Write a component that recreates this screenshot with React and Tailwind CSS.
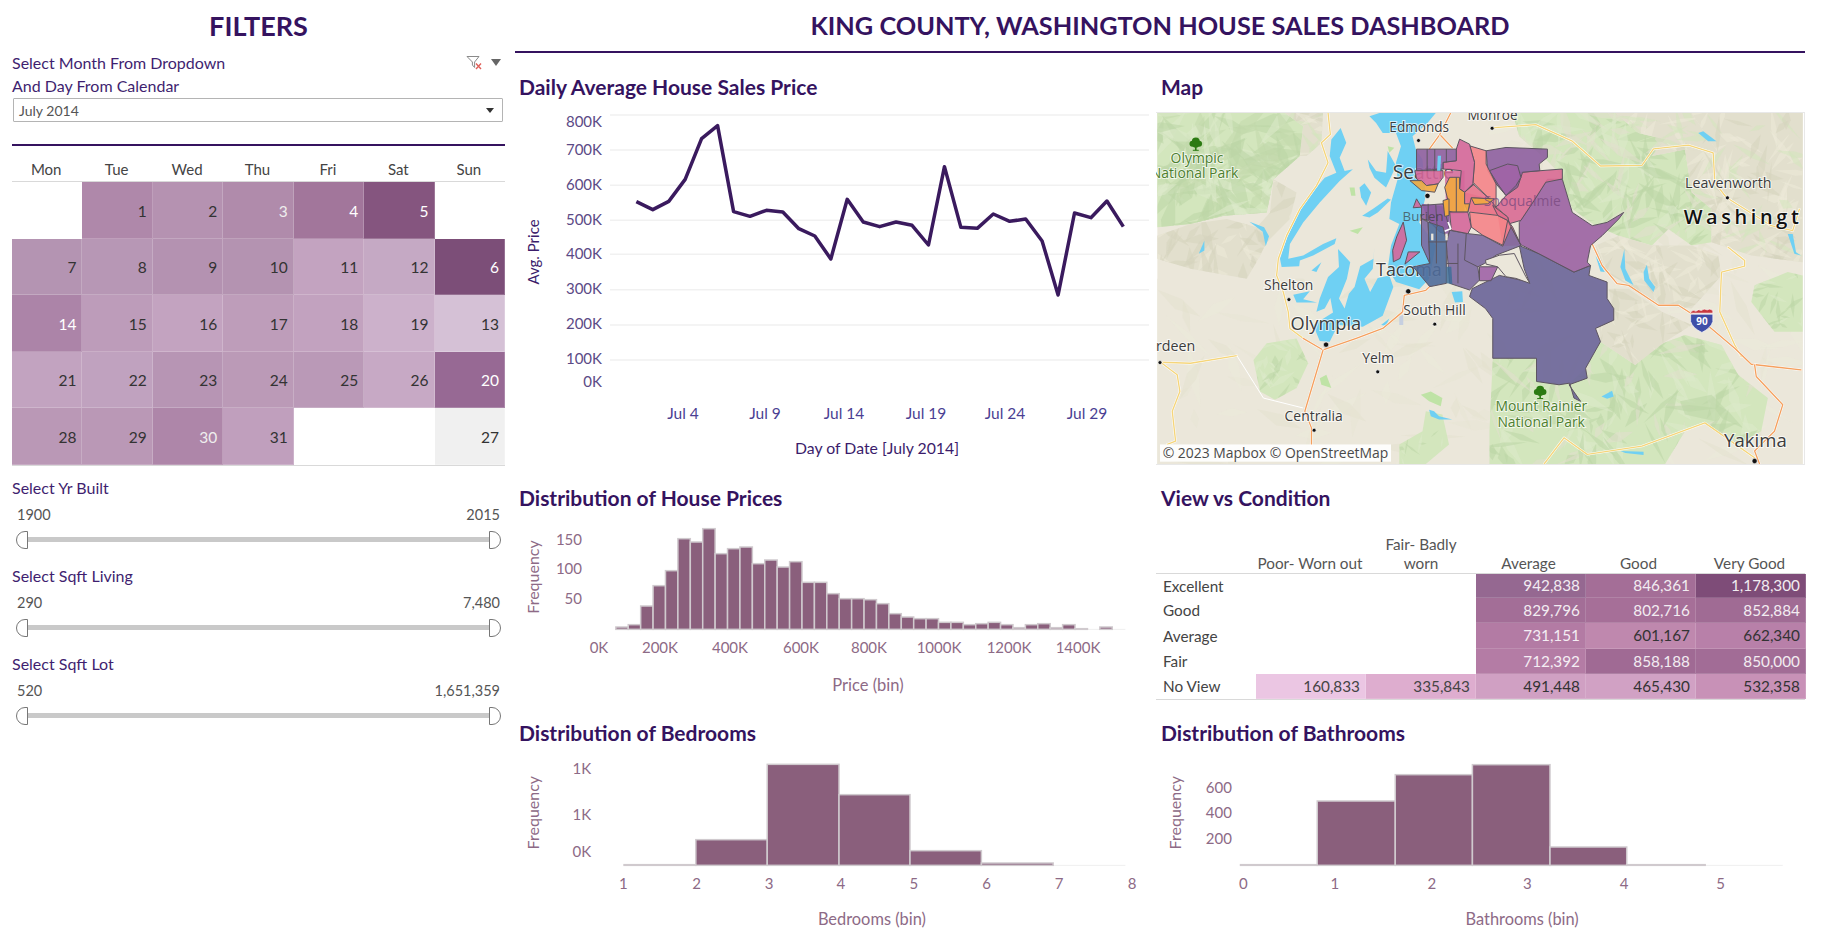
import React from "react";

const AXIS = "#8d6a86";

const calendar = [
  [null, ["1", "bg-[#af88aa]", "text-[#333]"], ["2", "bg-[#b592b1]", "text-[#333]"], ["3", "bg-[#b08bab]", "text-[#eee]"], ["4", "bg-[#a2769b]", "text-white"], ["5", "bg-[#85557f]", "text-white"], null],
  [["7", "bg-[#b494b2]", "text-[#333]"], ["8", "bg-[#b797b5]", "text-[#333]"], ["9", "bg-[#b492b1]", "text-[#333]"], ["10", "bg-[#b493b1]", "text-[#333]"], ["11", "bg-[#c3a3c0]", "text-[#333]"], ["12", "bg-[#c5a9c4]", "text-[#333]"], ["6", "bg-[#7c4e78]", "text-white"]],
  [["14", "bg-[#ac84a8]", "text-white"], ["15", "bg-[#bd9cba]", "text-[#333]"], ["16", "bg-[#c3a3c0]", "text-[#333]"], ["17", "bg-[#be9dba]", "text-[#333]"], ["18", "bg-[#c2a2bf]", "text-[#333]"], ["19", "bg-[#ccb1cb]", "text-[#333]"], ["13", "bg-[#d5c1d6]", "text-[#333]"]],
  [["21", "bg-[#c2a3c0]", "text-[#333]"], ["22", "bg-[#c0a2bf]", "text-[#333]"], ["23", "bg-[#b795b4]", "text-[#333]"], ["24", "bg-[#bb9ab7]", "text-[#333]"], ["25", "bg-[#ba99b7]", "text-[#333]"], ["26", "bg-[#c7a9c5]", "text-[#333]"], ["20", "bg-[#976994]", "text-white"]],
  [["28", "bg-[#ba98b6]", "text-[#333]"], ["29", "bg-[#ba98b6]", "text-[#333]"], ["30", "bg-[#ae86a9]", "text-[#eee]"], ["31", "bg-[#c09fbd]", "text-[#333]"], null, null, ["27", "bg-[#f0f0f0]", "text-[#333]"]],
];

const days = ["Mon", "Tue", "Wed", "Thu", "Fri", "Sat", "Sun"];

function Calendar() {
  return (
    <div>
      <div className="grid grid-cols-7 h-[36px] border-b border-[#d9d9d9] text-[15px] text-[#444]">
        {days.map((d) => (
          <div key={d} className="flex items-end justify-center pb-[1px] pr-[2px]">{d}</div>
        ))}
      </div>
      {calendar.map((row, r) => (
        <div key={r} className="grid grid-cols-7 h-[56.6px]">
          {row.map((c, i) =>
            c ? (
              <div key={i} className={`flex items-center justify-end pr-[5px] pt-[3px] text-[15.5px] border-b border-r border-white/20 ${c[1]} ${c[2]}`}>{c[0]}</div>
            ) : (
              <div key={i} />
            )
          )}
        </div>
      ))}
      <div className="h-px bg-[#d9d9d9]" />
    </div>
  );
}

function Slider({ label, min, max }) {
  return (
    <div className="mb-[11px]">
      <div className="h-5 leading-5 text-[16px] text-[#3f1f70]">{label}</div>
      <div className="mt-[7px] h-5 leading-5 px-[5px] flex justify-between text-[14.5px] text-[#555]">
        <span>{min}</span>
        <span>{max}</span>
      </div>
      <div className="h-[30px] px-1 flex items-center">
        <div className="w-3 h-[18px] bg-white border border-[#777] rounded-l-full" />
        <div className="flex-1 h-[5px] bg-[#c9c9c9]" />
        <div className="w-3 h-[18px] bg-white border border-[#777] rounded-r-full" />
      </div>
    </div>
  );
}

function Filters() {
  return (
    <aside className="w-[515px] shrink-0 pl-3 pr-[10px]">
      <h1 className="h-[52px] flex items-center justify-center text-[27px] font-bold text-[#35135f]">FILTERS</h1>
      <div className="h-[21px] leading-[21px] flex items-center justify-between text-[16px] text-[#3f1f70]">
        <span>Select Month From Dropdown</span>
        <span className="flex items-center gap-[8px] pr-[4px]">
          <svg width="17" height="15" viewBox="0 0 17 15">
            <path d="M1 1.5h12L8.6 7v5.5L6.4 10V7z" fill="none" stroke="#8a8a8a" strokeWidth="1" />
            <path d="M10 8.5l5 5.5M15 8.5l-5 5.5" stroke="#e0605a" strokeWidth="1.4" />
          </svg>
          <svg width="10" height="7" viewBox="0 0 10 7"><path d="M0 0h10L5 7z" fill="#666" /></svg>
        </span>
      </div>
      <div className="mt-[2px] h-[21px] leading-[21px] text-[16px] text-[#3f1f70]">And Day From Calendar</div>
      <div className="mt-[2px] ml-px mr-[2px] h-[24px] border border-[#b4b4b4] rounded-[1px] flex items-center justify-between px-[5px] text-[14px] text-[#555]">
        <span>July 2014</span>
        <svg width="8" height="5" viewBox="0 0 8 5" className="mr-[3px]"><path d="M0 0h8L4 5z" fill="#333" /></svg>
      </div>
      <div className="mt-[22px] h-[2px] bg-[#35135f]" />
      <Calendar />
      <div className="mt-[12px]">
        <Slider label="Select Yr Built" min="1900" max="2015" />
        <Slider label="Select Sqft Living" min="290" max="7,480" />
        <Slider label="Select Sqft Lot" min="520" max="1,651,359" />
      </div>
    </aside>
  );
}

function PanelTitle({ children, className = "" }) {
  return <h2 className={`h-[30px] leading-[30px] text-[21px] font-bold text-[#35135f] ${className}`}>{children}</h2>;
}

const linePts = [[308,425],[348,449],[387,424],[427,358],[467,236],[506,197],[545,455],[585,469],[625,451],[665,456],[704,506],[743,528],[782,597],[822,418],[861,486],[901,500],[941,486],[980,496],[1020,555],[1059,320],[1099,502],[1139,505],[1178,462],[1218,484],[1257,477],[1297,543],[1336,705],[1376,459],[1416,473],[1455,423],[1495,500]];

function LineChart() {
  const grid = [115, 150, 185.3, 220.3, 254.3, 289.7, 325, 360];
  const yl = [["800K", 123], ["700K", 151], ["600K", 186], ["500K", 221], ["400K", 255], ["300K", 290], ["200K", 325], ["100K", 360], ["0K", 383]];
  const xl = [["Jul 4", 683], ["Jul 9", 765], ["Jul 14", 844], ["Jul 19", 926], ["Jul 24", 1005], ["Jul 29", 1087]];
  const pts = linePts.map(([x, y]) => `${510 + x / 2.4375},${60 + y / 3}`).join(" ");
  return (
    <svg width="641" height="381" viewBox="515 102 641 381" className="block">
      {grid.map((y) => <line key={y} x1="610" x2="1149" y1={y} y2={y} stroke="#f1f1f1" strokeWidth="1.5" />)}
      {yl.map(([t, y]) => <text key={t} x="602" y={y} textAnchor="end" dominantBaseline="middle" fontSize="15" fill="#5b4a86">{t}</text>)}
      {xl.map(([t, x]) => <text key={t} x={x} y="415" textAnchor="middle" dominantBaseline="middle" fontSize="15.5" fill="#4b3f93">{t}</text>)}
      <text x="877" y="450" textAnchor="middle" dominantBaseline="middle" fontSize="15.8" fill="#3b1c6b">Day of Date [July 2014]</text>
      <text transform="translate(535 252) rotate(-90)" textAnchor="middle" dominantBaseline="middle" fontSize="15" fill="#3b1c6b">Avg. Price</text>
      <polyline points={pts} fill="none" stroke="#3a1a5e" strokeWidth="3.5" strokeLinejoin="round" />
    </svg>
  );
}

function Bars({ bars, toX, toY, base }) {
  return bars.map(([a, b, t], i) => (
    <rect key={i} x={toX(a)} width={toX(b) - toX(a)} y={toY(t)} height={Math.max(toY(base) - toY(t), 0.5)} fill="#8a5f7c" stroke="#d0cace" strokeWidth="1.5" />
  ));
}

const priceTops = [441,434,378,317,272,176,186,146,221,206,201,251,240,261,245,307,307,341,356,356,359,371,401,411,416,416,427,427,434,431,427,434,443,434,431,443,434,446,null,441];

function PriceHist() {
  const toX = (z) => 510 + z / 2.4375;
  const toY = (z) => 480 + z / 3;
  const bars = priceTops.map((t, i) => [258 + i * 30.25, 258 + (i + 1) * 30.25, t]).filter((b) => b[2] !== null);
  const xl = [["0K", 599], ["200K", 660], ["400K", 730], ["600K", 801], ["800K", 869], ["1000K", 939], ["1200K", 1009], ["1400K", 1078]];
  return (
    <svg width="641" height="205" viewBox="515 513 641 205" className="block">
      <line x1={toX(258)} x2={toX(1500)} y1={toY(448)} y2={toY(448)} stroke="#efefef" />
      <Bars bars={bars} toX={toX} toY={toY} base={448} />
      {[["150", 541], ["100", 570], ["50", 600]].map(([t, y]) => <text key={t} x="582" y={y} textAnchor="end" dominantBaseline="middle" fontSize="15" fill={AXIS}>{t}</text>)}
      {xl.map(([t, x]) => <text key={t} x={x} y="649" textAnchor="middle" dominantBaseline="middle" fontSize="15" fill={AXIS}>{t}</text>)}
      <text x="868" y="687" textAnchor="middle" dominantBaseline="middle" fontSize="16.5" fill={AXIS}>Price (bin)</text>
      <text transform="translate(535 577) rotate(-90)" textAnchor="middle" dominantBaseline="middle" fontSize="16" fill={AXIS}>Frequency</text>
    </svg>
  );
}

function BedHist() {
  const toX = (z) => 510 + z / 2.4375;
  const toY = (z) => 711 + z / 3;
  const bars = [[278,453,461],[453,627,386],[627,802,160],[802,975,251],[975,1149,419],[1149,1324,456]];
  const xl = [[279,"1"],[457,"2"],[634,"3"],[809,"4"],[987,"5"],[1164,"6"],[1341,"7"],[1519,"8"]];
  return (
    <svg width="641" height="195" viewBox="515 748 641 195" className="block">
      <line x1={toX(278)} x2={toX(1500)} y1={toY(463)} y2={toY(463)} stroke="#efefef" />
      <Bars bars={bars} toX={toX} toY={toY} base={463} />
      {[["1K", 179], ["1K", 315], ["0K", 427]].map(([t, z], i) => <text key={i} x={toX(198)} y={toY(z)} textAnchor="end" dominantBaseline="middle" fontSize="15" fill={AXIS}>{t}</text>)}
      {xl.map(([z, t]) => <text key={t} x={toX(z) - 1} y="885" textAnchor="middle" dominantBaseline="middle" fontSize="15" fill={AXIS}>{t}</text>)}
      <text x={toX(887) - 2} y="921" textAnchor="middle" dominantBaseline="middle" fontSize="16.4" fill={AXIS}>Bedrooms (bin)</text>
      <text transform={`translate(${toX(60)} ${toY(305)}) rotate(-90)`} textAnchor="middle" dominantBaseline="middle" fontSize="16" fill={AXIS}>Frequency</text>
    </svg>
  );
}

function BathHist() {
  const toX = (z) => 1150 + z / 2.32;
  const toY = (z) => 711 + z / 3;
  const bars = [[210,388,461],[388,569,270],[569,748,191],[748,928,161],[928,1106,408],[1106,1288,461]];
  const xl = [[219,"0"],[431,"1"],[656,"2"],[878,"3"],[1102,"4"],[1326,"5"]];
  return (
    <svg width="649" height="195" viewBox="1156 748 649 195" className="block">
      <line x1={toX(210)} x2={toX(1468)} y1={toY(463)} y2={toY(463)} stroke="#efefef" />
      <Bars bars={bars} toX={toX} toY={toY} base={463} />
      {[["600", 228], ["400", 305], ["200", 381]].map(([t, z]) => <text key={t} x={toX(190)} y={toY(z) + 2} textAnchor="end" dominantBaseline="middle" fontSize="15" fill={AXIS}>{t}</text>)}
      {xl.map(([z, t]) => <text key={t} x={toX(z) - 1} y="885" textAnchor="middle" dominantBaseline="middle" fontSize="15" fill={AXIS}>{t}</text>)}
      <text x={toX(868) - 2} y="921" textAnchor="middle" dominantBaseline="middle" fontSize="16.4" fill={AXIS}>Bathrooms (bin)</text>
      <text transform={`translate(${toX(62)} ${toY(305)}) rotate(-90)`} textAnchor="middle" dominantBaseline="middle" fontSize="16" fill={AXIS}>Frequency</text>
    </svg>
  );
}

const tableRows = [
  ["Excellent", "h-[24px]", [null, null, ["942,838", "bg-[#956891]", "text-[#f2ecf1]"], ["846,361", "bg-[#a46e97]", "text-[#f2ecf1]"], ["1,178,300", "bg-[#7e4c78]", "text-[#f2ecf1]"]]],
  ["Good", "h-[25px]", [null, null, ["829,796", "bg-[#a36e97]", "text-[#f2ecf1]"], ["802,716", "bg-[#a66f98]", "text-[#f2ecf1]"], ["852,884", "bg-[#a06b94]", "text-[#f2ecf1]"]]],
  ["Average", "h-[26px]", [null, null, ["731,151", "bg-[#b37ba4]", "text-[#f5eef4]"], ["601,167", "bg-[#bf88ae]", "text-[#333]"], ["662,340", "bg-[#b880a9]", "text-[#333]"]]],
  ["Fair", "h-[25px]", [null, null, ["712,392", "bg-[#b47ca5]", "text-[#f5eef4]"], ["858,188", "bg-[#a06a94]", "text-[#f2ecf1]"], ["850,000", "bg-[#a26c96]", "text-[#f2ecf1]"]]],
  ["No View", "h-[25px]", [["160,833", "bg-[#ebc6e3]", "text-[#444]"], ["335,843", "bg-[#deadcf]", "text-[#444]"], ["491,448", "bg-[#d0a0c3]", "text-[#333]"], ["465,430", "bg-[#d1a1c4]", "text-[#333]"], ["532,358", "bg-[#c891b7]", "text-[#333]"]]],
];

function HeatTable() {
  const cols = "grid grid-cols-[100px_repeat(5,110px)]";
  return (
    <div className="text-[15.3px]">
      <div className={`${cols} h-[61px] items-end border-b border-[#d9d9d9] text-[#555] text-center leading-[19px]`}>
        <div />
        <div className="pr-[2px]">Poor- Worn out</div>
        <div>Fair- Badly<br />worn</div>
        <div className="pr-[5px]">Average</div>
        <div className="pr-[5px]">Good</div>
        <div className="pr-[3px]">Very Good</div>
      </div>
      {tableRows.map(([name, h, cells]) => (
        <div key={name} className={`${cols} ${h}`}>
          <div className="pl-[7px] flex items-center text-[#444]">{name}</div>
          {cells.map((c, i) =>
            c ? (
              <div key={i} className={`flex items-center justify-end pr-[5px] border-b border-r border-white/15 ${c[1]} ${c[2]}`}>{c[0]}</div>
            ) : (
              <div key={i} />
            )
          )}
        </div>
      ))}
      <div className="h-px bg-[#d9d9d9]" />
    </div>
  );
}

const WATER = "#6fd0f3";
const G0 = "#d3e6bd";
const G1 = "#bcd5a5";
const G2 = "#dceaca";
const T0 = "#e2dfcd";
const T1 = "#d6d3bd";
const T2 = "#ecead9";

function rng(seed) {
  let s = seed;
  return () => {
    s = (s * 1664525 + 1013904223) % 4294967296;
    return s / 4294967296;
  };
}

function Facets({ id, points, base, colors, n, seed, size = 90, opacity = 0.55 }) {
  const r = rng(seed);
  const nums = points.trim().split(/[\s,]+/).map(Number);
  const xs = nums.filter((_, i) => i % 2 === 0);
  const ys = nums.filter((_, i) => i % 2 === 1);
  const x0 = Math.min(...xs), x1 = Math.max(...xs), y0 = Math.min(...ys), y1 = Math.max(...ys);
  const shards = [];
  for (let i = 0; i < n; i++) {
    const cx = x0 + r() * (x1 - x0);
    const cy = y0 + r() * (y1 - y0);
    const a = r() * Math.PI;
    const l = size * (0.4 + r());
    const w = size * (0.1 + r() * 0.22);
    const dx = Math.cos(a), dy = Math.sin(a);
    const p = [
      [cx - dx * l, cy - dy * l],
      [cx - dy * w, cy + dx * w],
      [cx + dx * l, cy + dy * l],
      [cx + dy * w * 0.7, cy - dx * w * 0.7],
    ].map((q) => q.map((v) => v.toFixed(0)).join(",")).join(" ");
    shards.push(<polygon key={i} points={p} fill={colors[Math.floor(r() * colors.length)]} fillOpacity={opacity} />);
  }
  return (
    <g>
      <clipPath id={id}><polygon points={points} /></clipPath>
      <polygon points={points} fill={base} />
      <g clipPath={`url(#${id})`}>{shards}</g>
    </g>
  );
}

function Road({ pts, color, w = 4 }) {
  return (
    <g fill="none" strokeLinejoin="round" strokeLinecap="round">
      <polyline points={pts} stroke="#fff" strokeWidth={w + 3} />
      <polyline points={pts} stroke={color} strokeWidth={w} />
    </g>
  );
}

function Dot({ x, y, r = 6 }) {
  return <circle cx={x} cy={y} r={r} fill="#111" stroke="#fff" strokeWidth="2" />;
}

function Label({ x, y, size, children, fill = "#3c3c3c", weight = 400, ls = 0 }) {
  return (
    <text x={x} y={Number(y) + 5} fontSize={size} fill={fill} fontWeight={weight} letterSpacing={ls} dominantBaseline="middle" stroke="#fff" strokeWidth="6" strokeOpacity="0.7" paintOrder="stroke" fontFamily="'Open Sans', sans-serif">{children}</text>
  );
}

function Tree({ x, y }) {
  return (
    <g fill="#2c7a12">
      <circle cx={x - 10} cy={y} r="9" /><circle cx={x + 10} cy={y} r="9" /><circle cx={x} cy={y - 7} r="12" /><circle cx={x} cy={y + 2} r="10" />
      <rect x={x - 2.5} y={y + 6} width="5" height="14" /><rect x={x - 9} y={y + 18} width="18" height="3" />
    </g>
  );
}

const STROKE = "#5d5560";
function R({ p, f }) {
  return <polygon points={p} fill={f} fillOpacity="0.9" stroke={STROKE} strokeWidth="3" strokeLinejoin="round" />;
}

function MapView() {
  return (
    <svg width="649" height="353" viewBox="0 0 1947 1059" className="block border-y border-r border-[#e8e8e8]">
      <rect width="1947" height="1059" fill="#ebe7da" />
      <Facets id="f0" points="0,340 0,1059 1947,1059 1947,0 1000,0 1000,500 0,500" base="#ebe7da" colors={[T2, T0, "#e7e4d3"]} n={260} seed={7} size={70} opacity={0.45} />
      {/* Olympic terrain */}
      <Facets id="f1" points="0,0 385,0 440,40 430,130 350,200 330,300 200,310 100,335 0,345" base={G0} colors={[G1, G2, G1, "#c3d9ab"]} n={130} seed={11} size={80} />
      <Facets id="f2" points="385,0 500,0 495,90 450,130 430,130 440,40" base={T0} colors={[T1, G0, T2]} n={20} seed={13} size={45} />
      <Facets id="f3" points="0,370 100,335 210,320 300,345 340,300 350,200 420,240 400,320 330,390 310,430 270,500 100,470 0,440" base={T0} colors={[T1, T2, T1]} n={70} seed={17} size={60} />
      <Facets id="f4" points="290,745 330,695 420,680 455,755 420,830 355,865 310,840" base={G0} colors={[G1, G2]} n={30} seed={19} size={40} />
      <Facets id="f5" points="730,1000 800,960 810,900 860,910 880,1000 810,1059 730,1059" base={G0} colors={[G1, G2]} n={14} seed={23} size={24} />
      <polygon points="795,850 825,840 860,860 855,885 820,870" fill="#bfe3a6" />
      <polygon points="490,800 510,790 525,830 495,820" fill="#bfe3a6" />
      <polygon points="580,225 595,225 598,250 585,250" fill="#bfe3a6" />
      <polygon points="580,355 620,345 605,365" fill="#bfe3a6" />
      <polygon points="695,100 715,105 700,120" fill="#bfe3a6" />
      {/* east terrain */}
      <g transform="translate(972 0)">
        <Facets id="g1" points="200,0 410,0 480,60 560,80 520,130 620,110 640,240 700,290 700,390 640,400 570,350 520,400 420,370 350,340 280,290 240,180 190,130 120,70 100,0" base={G0} colors={[G1, G2, G1, T0]} n={170} seed={29} size={60} />
        <Facets id="g2" points="410,0 640,0 720,120 700,180 620,110 520,130 560,80 480,60" base={T0} colors={[T1, T2, G0]} n={40} seed={31} size={50} />
        <Facets id="g3" points="640,0 975,0 975,450 820,430 700,390 700,290 640,240 620,110 720,120" base={T0} colors={[T1, T2, G0, T2]} n={110} seed={37} size={55} />
        <Facets id="g4" points="350,400 420,370 520,400 640,400 720,430 730,490 640,590 540,580 450,520 380,480" base={T0} colors={[T1, T2, T2]} n={60} seed={41} size={55} />
        <Facets id="g5" points="830,520 930,480 975,490 975,660 890,660 820,570" base={G0} colors={[G1, G2]} n={24} seed={43} size={30} />
        <Facets id="g6" points="40,740 172,740 172,810 272,815 320,770 365,690 470,760 540,700 620,670 730,700 780,790 870,860 850,960 780,1000 680,935 620,960 560,1059 30,1059 30,960" base={G0} colors={[G1, G2, G1, T0]} n={170} seed={47} size={60} />
        <Facets id="g7" points="390,530 450,530 550,600 640,640 560,690 470,760 365,690 360,640 405,620" base={T0} colors={[T1, T2]} n={40} seed={53} size={50} />
        <polygon points="605,870 700,850 745,895 710,930 620,910" fill={G1} fillOpacity="0.55" />
        <polygon points="660,60 675,55 715,85 690,85" fill={WATER} />
        <polygon points="437,410 440,470 465,520 440,505 425,465" fill={WATER} />
        <polygon points="505,458 512,500 530,525 525,540 497,505 495,480" fill={WATER} />
        <polygon points="930,365 945,365 955,420 970,430 950,425" fill={WATER} />
        <polygon points="368,855 400,838 405,855 385,862" fill={WATER} />
        <polygon points="350,430 378,480 365,478" fill={WATER} />
        <polygon points="425,1020 495,1022 495,1032 440,1026" fill={WATER} />
      </g>
      {/* west water */}
      <g fill={WATER}>
        <polygon points="640,10 670,0 840,0 815,30 770,70 780,110 800,140 810,250 790,330 840,400 820,500 790,532 720,510 695,470 705,400 730,335 700,320 705,270 725,200 720,150 735,100 720,60 680,60 660,30" />
        <polygon points="520,130 525,80 553,45 570,90 550,135 565,175 590,170 550,205 490,270 440,330 400,395 395,440 440,430 500,395 540,378 535,395 470,430 430,445 428,462 375,465 370,440 392,375 430,295 480,225 505,195 540,180" />
        <polygon points="635,140 660,175 690,180 695,115 720,160 690,225 678,215 655,195 640,165" />
        <polygon points="610,225 625,212 645,240 630,280 615,255" />
        <polygon points="618,310 650,290 695,258 705,262 665,300 640,315" />
        <polygon points="655,405 652,440 612,462 595,525 578,545 565,590 548,560 572,500 582,450 545,410 548,465 515,495 490,560 480,600 505,590 522,558 530,602 470,640 490,688 520,690 545,640 620,645 680,612 712,525 700,490 665,498 642,540 625,500 650,470" />
        <polygon points="410,548 460,538 440,562 482,572 420,572" />
        <polygon points="465,475 495,450 480,480" />
        <polygon points="278,328 322,345 337,372 327,402 318,358" />
        <polygon points="125,425 142,385 142,415" />
        <polygon points="888,540 920,538 922,570 898,572" />
        <polygon points="820,895 835,900 850,915 890,925 850,925 825,915" />
        <polygon points="675,640 700,620 690,642" />
      </g>
      <polygon points="730,615 742,608 742,640 730,640" fill="#c6cfe0" />
      {/* roads */}
      <Road pts="515,0 522,65 495,90 515,150 480,220 430,290 390,370 365,440 360,490 380,540 395,600 400,650 440,680" color="#f5d57a" />
      <Road pts="10,752 100,755 240,732" color="#f5d57a" />
      <polyline points="240,732 320,860 440,890" fill="none" stroke="#fff" strokeWidth="3" />
      <Road pts="10,752 60,790 68,840 45,900 55,990 30,1000" color="#f5d57a" />
      <Road pts="440,680 500,715 600,680 680,650 740,600 745,550 810,535 825,520" color="#f5a05e" />
      <Road pts="500,715 445,900 465,950 465,1000" color="#f5a05e" />
      <Road pts="820,110 852,65 890,105" color="#f5a05e" />
      <Road pts="852,65 885,0" color="#f5a05e" />
      <g transform="translate(972 0)">
        <Road pts="35,45 170,35 280,85 365,160 490,158 525,108 630,97 705,120 710,210 745,255 880,340 945,355 965,290" color="#f5d57a" />
        <Road pts="750,405 800,445 800,462 730,480 725,600 770,700 790,735" color="#f5d57a" />
        <Road pts="195,1059 255,980 325,1030 490,1005 680,935 780,1005 830,1040" color="#f5d57a" />
        <Road pts="340,395 370,460 415,515 450,520 540,580 600,580 670,625 770,710 820,758 970,775" color="#f5a05e" />
        <Road pts="830,760 835,795 915,880 890,960 830,1020 845,1059" color="#f5a05e" />
        <path d="M637 600 q8 -8 16 -2 q8 -8 16 -2 q8 -8 18 -2 q8 -6 17 2 v8 h-67z" fill="#c8393f" stroke="#fff" strokeWidth="2" />
        <path d="M637 607 h67 v22 q-6 20 -33 33 q-28 -13 -34 -33z" fill="#3f4fa8" stroke="#fff" strokeWidth="2" />
        <text x="671" y="631" textAnchor="middle" dominantBaseline="middle" fontSize="30" fontWeight="700" fill="#fff" fontFamily="'Open Sans', sans-serif">90</text>
      </g>
      {/* labels under the regions */}
      <Label x="710" y="178" size="58">Seattle</Label>
      <Label x="660" y="472" size="54">Tacoma</Label>
      {/* regions, in crop coordinates around Seattle */}
      <g transform="translate(582 24)">
        <R f="#6a6498" p="368,506 450,466 540,486 525,446 510,376 570,401 675,456 725,436 720,466 775,486 775,536 795,566 795,601 740,626 755,666 710,746 715,776 660,796 695,846 675,836 662,791 630,796 562,786 562,716 430,716 430,596 408,566 360,530" />
        <R f="#9b62a2" p="510,306 595,176 640,176 670,276 730,316 775,306 825,276 810,296 760,346 725,376 715,426 725,436 675,456 570,401 520,376 510,371" />
        <R f="#d96a93" p="510,155 640,145 640,175 590,185 555,240 515,300 480,310 475,290 440,260 470,225 500,200" />
        <R f="#8e5fa0" p="410,90 470,80 595,85 595,110 570,130 572,150 520,155 505,200 470,225 440,190 415,150" />
        <R f="#a063a6" p="420,150 475,130 505,135 515,170 500,195 470,225 445,190" />
        <polygon points="345,215 420,235 440,260 475,290 480,310 515,375 460,378 445,285 360,275" fill="#ea7a8c" />
        <polygon points="285,150 345,150 345,280 290,280" fill="#d5679a" fillOpacity="0.85" />
        <polygon points="215,250 300,260 300,330 240,310" fill="#8d5fa2" />
        <R f="#7d6aa0" p="300,330 355,340 400,345 460,378 485,320 515,375 510,378 440,405 405,430 385,440 390,480 360,510 300,490 290,370" />
        <R f="#f58488" p="360,75 410,90 410,130 440,190 440,260 420,235 370,185 375,125" />
        <R f="#f58488" p="360,275 445,285 475,300 460,375 400,345 365,320" />
        <R f="#e16c8d" p="430,255 475,290 480,310 515,375 490,320 475,300 445,285" />
        <R f="#e8748d" p="370,190 420,235 365,232 355,275 345,250 345,215" />
        <R f="#d5679a" p="320,85 330,55 360,70 375,125 370,190 345,215 330,205 335,150 280,145 280,125 320,120" />
        <R f="#8e5fa0" p="200,85 320,85 320,120 280,125 280,145 200,150" />
        <R f="#d5679a" p="195,150 280,150 280,170 265,190 230,195 200,175" />
        <R f="#f2a83f" p="180,180 215,180 230,195 265,190 255,215 215,210" />
        <R f="#f2a83f" p="300,170 330,170 330,205 345,215 345,250 360,250 355,275 310,275 285,270 295,240 285,200" />
        <R f="#f2a83f" p="365,232 435,235 415,250 375,252" />
        <R f="#d5679a" p="300,275 355,275 365,320 355,340 305,330" />
        <R f="#8d5fa2" p="215,255 280,250 300,330 295,345 270,335 235,300 215,295" />
        <R f="#7d6aa0" p="215,295 235,305 240,430 215,375" />
        <R f="#4f6b9a" p="235,305 280,320 290,360 290,490 240,500 190,440 240,430" />
        <R f="#d5679a" p="160,305 170,360 150,415 130,425 128,390 140,350" />
        <R f="#d5679a" p="200,235 215,260 190,262" />
        <R f="#d5679a" p="175,395 210,395 165,432" />
        <R f="#a063a6" p="390,440 445,440 425,482 390,482" />
        <polygon points="408,420 450,405 495,400 530,470 542,490 500,475 470,470 445,440 410,432" fill="#ebe7da" stroke={STROKE} strokeWidth="3" />
        <g fill="none" stroke={STROKE} strokeWidth="3">
          <polyline points="232,85 232,150" />
          <polyline points="255,85 255,150" />
          <polyline points="290,85 290,125" />
          <polyline points="235,365 290,365" />
          <polyline points="260,320 260,430" />
          <polyline points="325,370 325,430 290,430" />
          <polyline points="325,430 325,490" />
          <polyline points="350,340 345,420 385,440" />
          <polyline points="235,250 235,300" />
          <polyline points="258,252 262,320" />
          <polyline points="320,170 320,275" />
          <polyline points="345,215 375,190" />
        </g>
        <polygon points="264,105 274,105 272,150 262,150" fill={WATER} />
        <polygon points="280,240 298,235 298,285 285,288" fill="#f2a83f" stroke={STROKE} strokeWidth="3" />
        <rect x="244" y="340" width="7" height="20" fill="#ebe7da" />
        <rect x="287" y="340" width="7" height="20" fill="#ebe7da" />
        <polyline points="295,305 303,325 285,333" fill="none" stroke="#fff" strokeWidth="5" />
        <polygon points="290,440 305,440 308,492 290,490" fill="#3f6e99" fillOpacity="0.85" />
      </g>
      {/* labels on top */}
      <text x="985" y="268" fontSize="42" fill="#7a4a80" fillOpacity="0.8" dominantBaseline="middle" fontFamily="'Open Sans', sans-serif">Snoqualmie</text>
      <text x="740" y="316" fontSize="40" fill="#3c3c3c" fillOpacity="0.7" dominantBaseline="middle" fontFamily="'Open Sans', sans-serif">Burien</text>
      <Label x="700" y="40" size="41">Edmonds</Label>
      <Label x="936" y="6" size="41">Monroe</Label>
      <Tree x={116} y={93} />
      <Label x="40" y="134" size="42" fill="#4d7f2f">Olympic</Label>
      <Label x="-20" y="179" size="42" fill="#4d7f2f">National Park</Label>
      <Label x="322" y="518" size="42">Shelton</Label>
      <Label x="402" y="634" size="55">Olympia</Label>
      <Label x="742" y="592" size="42">South Hill</Label>
      <Label x="618" y="737" size="42">Yelm</Label>
      <Label x="-82" y="703" size="43">Aberdeen</Label>
      <Label x="384" y="912" size="42">Centralia</Label>
      <Tree x={1155} y={842} />
      <Label x="1020" y="884" size="42" fill="#4d7f2f">Mount Rainier</Label>
      <Label x="1026" y="930" size="42" fill="#4d7f2f">National Park</Label>
      <Label x="1592" y="211" size="43">Leavenworth</Label>
      <Label x="1588" y="314" size="60" fill="#111" weight={600} ls="11">Washingt</Label>
      <Label x="1710" y="988" size="56">Yakima</Label>
      <Dot x={788} y={83} /><Dot x={815} y={250} r={8} /><Dot x={757} y={538} r={8} /><Dot x={397} y={563} /><Dot x={509} y={699} r={8} />
      <Dot x={837} y={637} /><Dot x={665} y={781} /><Dot x={8} y={753} /><Dot x={473} y={957} /><Dot x={1010} y={46} />
      <Dot x={1720} y={256} /><Dot x={1802} y={1050} r={8} />
      <rect x="8" y="1000" width="697" height="52" fill="#fff" fillOpacity="0.9" />
      <text x="16" y="1030" fontSize="42" fill="#4a4a4a" dominantBaseline="middle" fontFamily="'Open Sans', sans-serif">© 2023 Mapbox  © OpenStreetMap</text>
    </svg>
  );
}

export default function App() {
  return (
    <div className="w-[1822px] h-[943px] flex bg-white overflow-hidden font-[Lato,'Liberation_Sans',sans-serif]">
      <Filters />
      <main className="flex-1 pr-[17px]">
        <div className="h-[53px] border-b-2 border-[#35135f] flex items-center justify-center text-[25.3px] font-bold text-[#35135f]">KING COUNTY, WASHINGTON HOUSE SALES DASHBOARD</div>
        <div className="pt-[19px] grid grid-cols-[641px_649px] grid-rows-[411px_235px_225px]">
          <section>
            <PanelTitle className="pl-[4px]">Daily Average House Sales Price</PanelTitle>
            <LineChart />
          </section>
          <section>
            <PanelTitle className="pl-[5px]">Map</PanelTitle>
            <div className="mt-[10px]"><MapView /></div>
          </section>
          <section>
            <PanelTitle className="pl-[4px]">Distribution of House Prices</PanelTitle>
            <PriceHist />
          </section>
          <section>
            <PanelTitle className="pl-[5px]">View vs Condition</PanelTitle>
            <HeatTable />
          </section>
          <section>
            <PanelTitle className="pl-[4px]">Distribution of Bedrooms</PanelTitle>
            <BedHist />
          </section>
          <section>
            <PanelTitle className="pl-[5px]">Distribution of Bathrooms</PanelTitle>
            <BathHist />
          </section>
        </div>
      </main>
    </div>
  );
}
